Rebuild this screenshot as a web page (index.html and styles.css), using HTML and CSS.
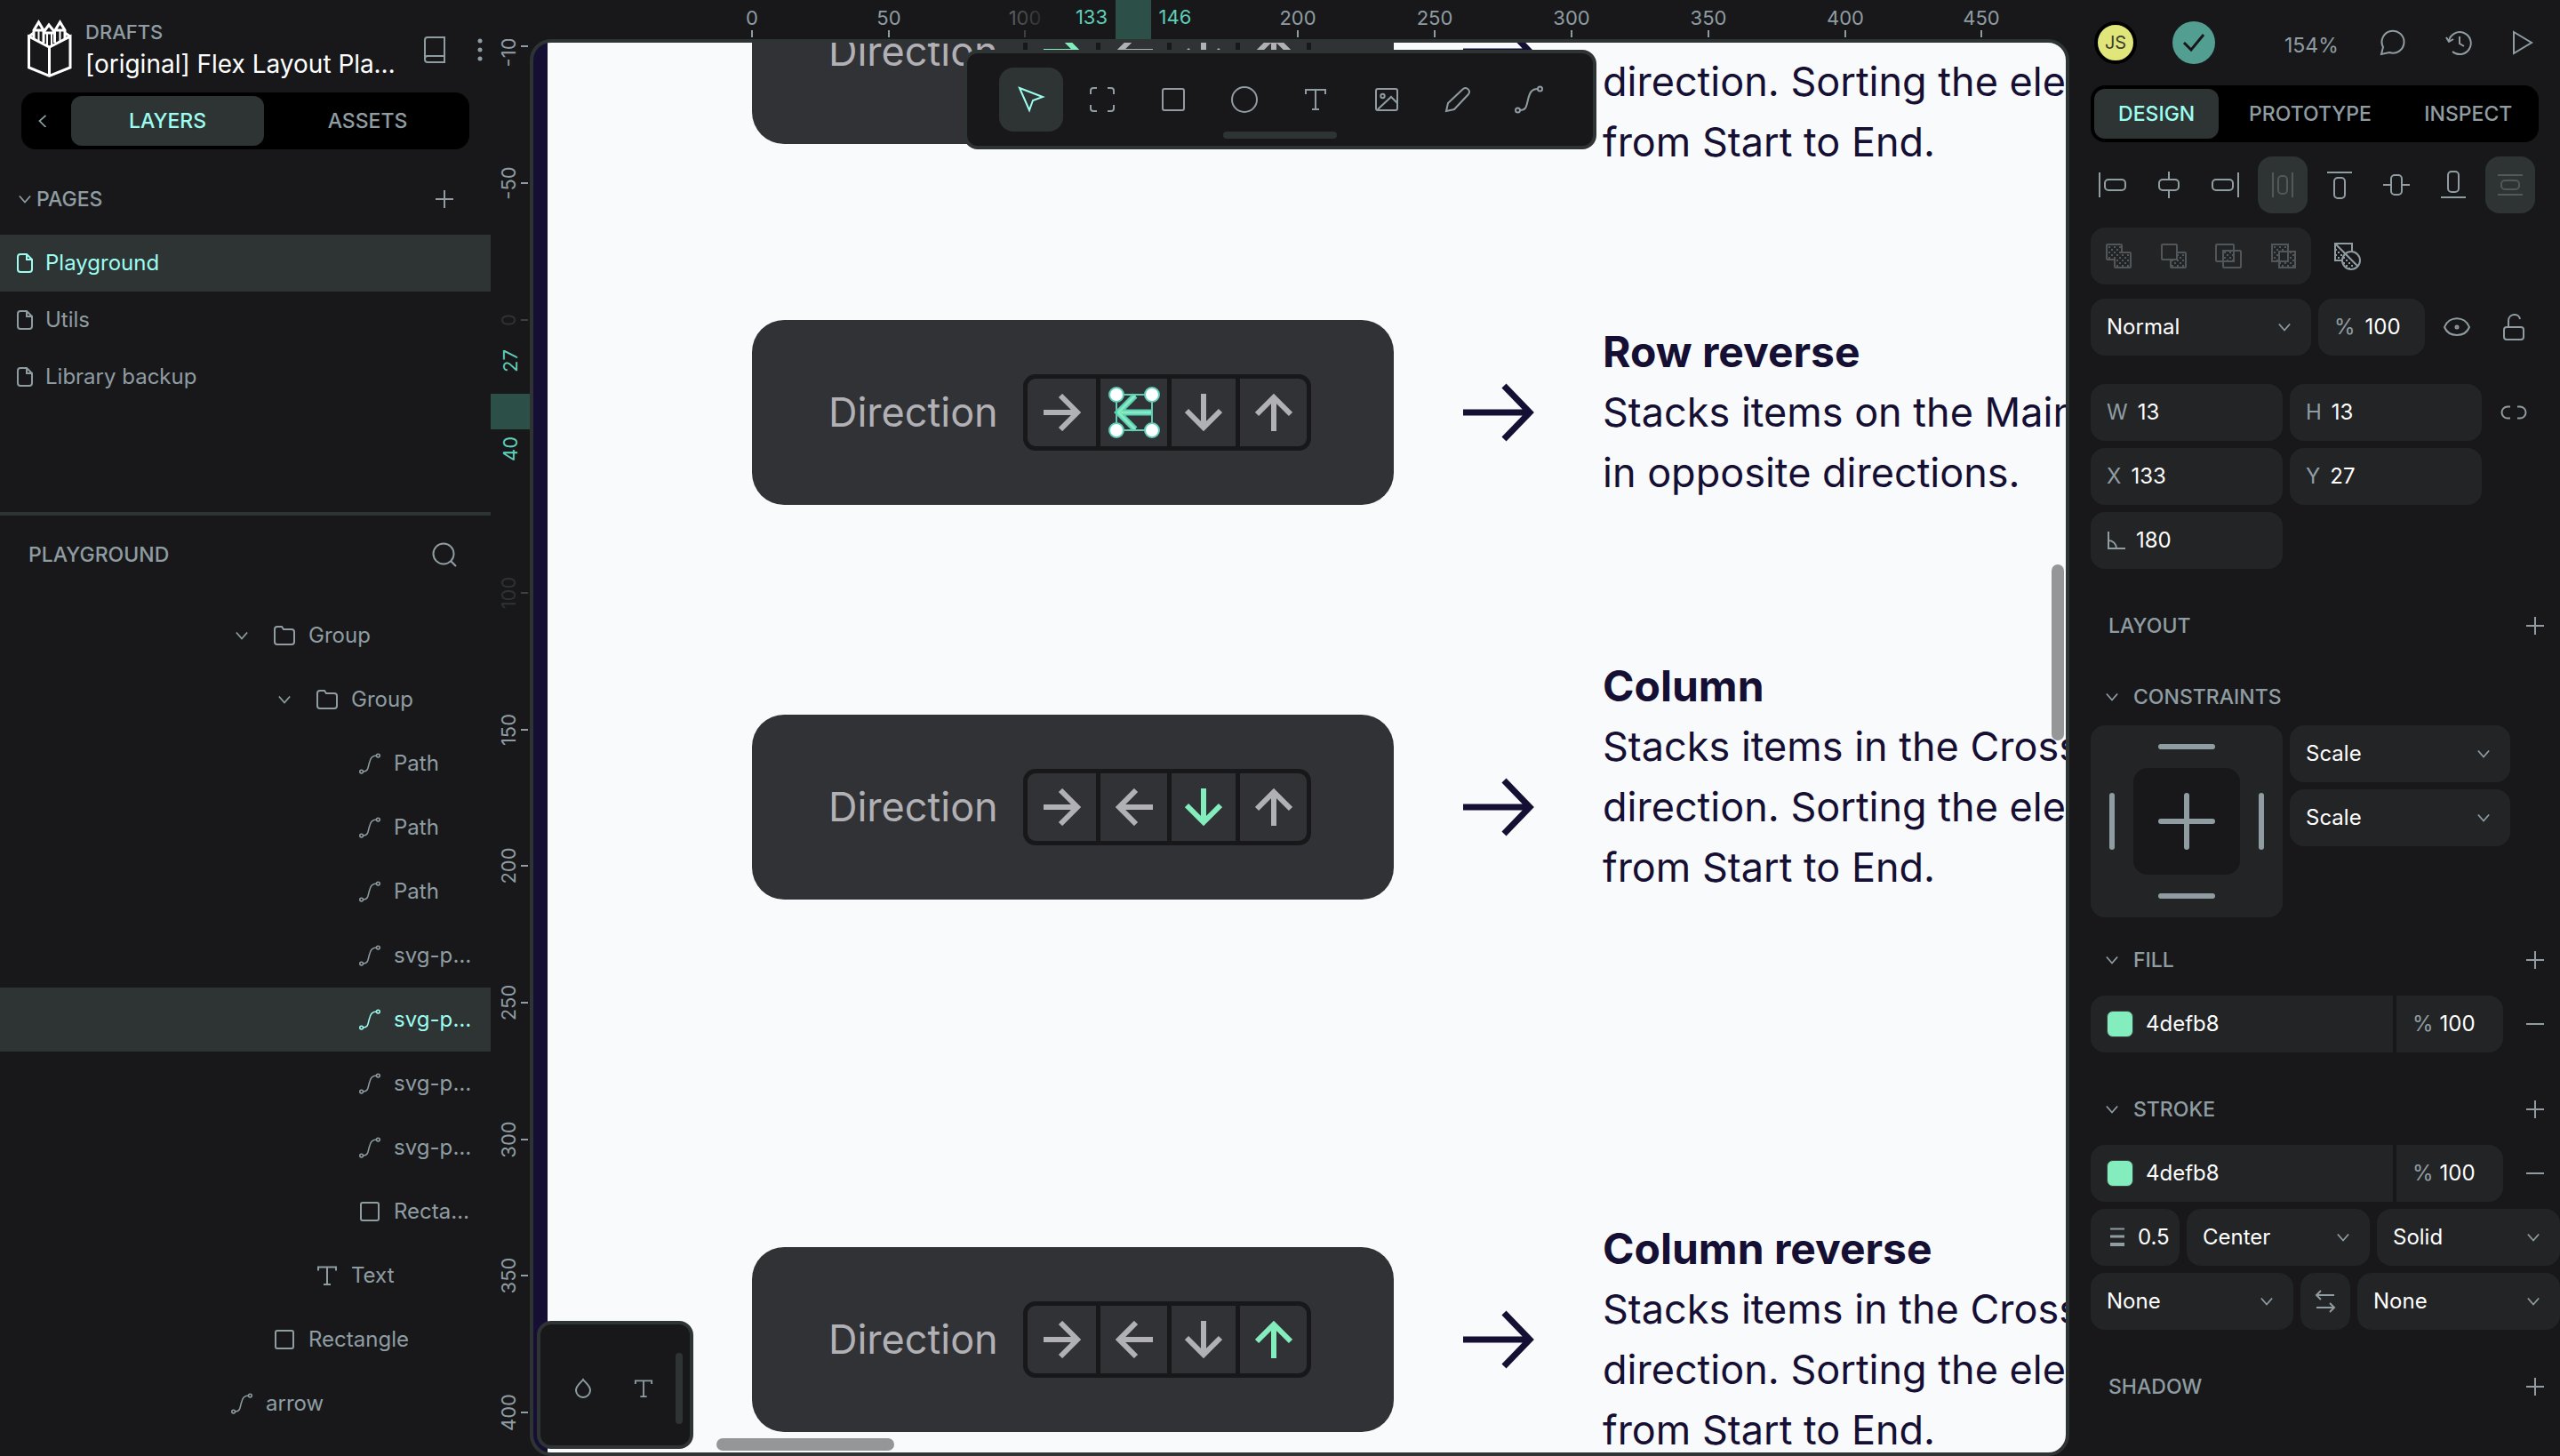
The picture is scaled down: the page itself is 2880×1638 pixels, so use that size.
FILE: index.html
```html
<!DOCTYPE html>
<html lang="en">
<head>
<meta charset="utf-8">
<title>[original] Flex Layout Playground</title>
<link rel="stylesheet" href="styles.css">
</head>
<body>
<svg class="defs" aria-hidden="true">
  <defs>
    <pattern id="dots-dim" width="6" height="6" patternUnits="userSpaceOnUse"><path d="M1 1h2v2h-2zM4 4h2v2h-2z" fill="#50565a" stroke="none"/></pattern>
    <pattern id="dots" width="6" height="6" patternUnits="userSpaceOnUse"><path d="M1 1h2v2h-2zM4 4h2v2h-2z" fill="#8f9da3" stroke="none"/></pattern>
    <linearGradient id="fade-x"><stop offset="0" stop-color="#5d6468"/><stop offset="1" stop-color="#2c2d30"/></linearGradient>
  </defs>
  <symbol id="chevron" viewBox="0 0 16 16"><path d="M1 4l7 8 7-8"/></symbol>
  <symbol id="chevron-left" viewBox="0 0 16 16"><path d="M12 1L4 8l8 8"/></symbol>
  <symbol id="plus" viewBox="0 0 20 20"><path d="M10 0v20M0 10h20"/></symbol>
  <symbol id="minus" viewBox="0 0 20 20"><path d="M0 10h20"/></symbol>
  <symbol id="page" viewBox="0 0 18 24"><path d="M11 2H4a3 3 0 0 0-3 3v14a3 3 0 0 0 3 3h10a3 3 0 0 0 3-3V8zM11 2v6h6"/></symbol>
  <symbol id="search" viewBox="0 0 28 28"><circle cx="13" cy="13" r="11.5"/><path d="M21 21l6 6"/></symbol>
  <symbol id="folder" viewBox="0 0 24 24"><path d="M4 2h5l2 3h9a3 3 0 0 1 3 3v11a3 3 0 0 1-3 3H4a3 3 0 0 1-3-3V5a3 3 0 0 1 3-3z"/></symbol>
  <symbol id="curve" viewBox="0 0 32 32"><circle cx="3.5" cy="28" r="2.5"/><circle cx="28.5" cy="4" r="2.5"/><path d="M6 28c7 0 7-4 9-12s4-12 11-12"/></symbol>
  <symbol id="rect" viewBox="0 0 24 24"><rect x="2" y="2" width="20" height="20" rx="2"/></symbol>
  <symbol id="text" viewBox="0 0 24 24"><path d="M2 6.5V2.5h20v4M12 2.5V22M8 22h8"/></symbol>
  <symbol id="link" viewBox="0 0 30 16"><path d="M11 1.500H8a6.500 6.500 0 0 0 0 13h3M19 1.500h3a6.500 6.500 0 0 1 0 13h-3"/></symbol>
  <symbol id="arrow" viewBox="0 0 42 42"><path d="M0 21h36M19 2l19 19-19 19"/></symbol>
</svg>

<div class="app">
  <aside class="left">
    <header class="file">
      <svg class="logo" viewBox="0 0 50 66"><path d="M1.500 18L24.500 30 48 18v35L24.500 62.500 1.500 53zM24.500 30v32M1.500 18L7 14M48 18l-6-4M7 20V11L12.500 2 18 11M31 11l5.500-9L42 11v10M18 25V13l6-8 6.500 8v12M7 11h11M31 11h11M18 14h13"/><path stroke-width="2" d="M12.500 12v11M22 15v13M27 15v13M36.500 12v11"/></svg>
      <div class="names">
        <span class="project">DRAFTS</span>
        <span class="title">[original] Flex Layout Playground</span>
      </div>
      <button class="icon" aria-label="Shared library"><svg width="26" height="32" viewBox="0 0 26 32"><path d="M5 2h19v28H5a3 3 0 0 1-3-3V5a3 3 0 0 1 3-3zM2 26a3 3 0 0 1 3-3h19"/></svg></button>
      <button class="icon" aria-label="Menu"><svg class="solid" width="8" height="28" viewBox="0 0 8 28"><circle cx="4" cy="4" r="2.500"/><circle cx="4" cy="14" r="2.500"/><circle cx="4" cy="24" r="2.500"/></svg></button>
    </header>
    <nav class="tabs side-tabs">
      <button class="back" aria-label="Collapse"><svg width="14" height="14"><use href="#chevron-left"/></svg></button>
      <button class="tab on">LAYERS</button>
      <button class="tab">ASSETS</button>
    </nav>
    <section class="pages">
      <div class="pages-head">
        <svg width="14" height="14"><use href="#chevron"/></svg>
        <h2>PAGES</h2>
        <button class="icon" aria-label="Add page"><svg width="20" height="20"><use href="#plus"/></svg></button>
      </div>
      <ul>
        <li><button class="page on"><svg width="18" height="24"><use href="#page"/></svg>Playground</button></li>
        <li><button class="page"><svg width="18" height="24"><use href="#page"/></svg>Utils</button></li>
        <li><button class="page"><svg width="18" height="24"><use href="#page"/></svg>Library backup</button></li>
      </ul>
    </section>
    <section class="layers">
      <div class="layers-head">
        <h2>PLAYGROUND</h2>
        <button class="icon" aria-label="Search"><svg width="28" height="28"><use href="#search"/></svg></button>
      </div>
      <ul>
        <li><button class="layer d1 open"><svg class="tw"><use href="#chevron"/></svg><svg><use href="#folder"/></svg><span>Group</span></button></li>
        <li><button class="layer d2 open"><svg class="tw"><use href="#chevron"/></svg><svg><use href="#folder"/></svg><span>Group</span></button></li>
        <li><button class="layer d3"><svg><use href="#curve"/></svg><span>Path</span></button></li>
        <li><button class="layer d3"><svg><use href="#curve"/></svg><span>Path</span></button></li>
        <li><button class="layer d3"><svg><use href="#curve"/></svg><span>Path</span></button></li>
        <li><button class="layer d3"><svg><use href="#curve"/></svg><span>svg-path</span></button></li>
        <li><button class="layer d3 on"><svg><use href="#curve"/></svg><span>svg-path</span></button></li>
        <li><button class="layer d3"><svg><use href="#curve"/></svg><span>svg-path</span></button></li>
        <li><button class="layer d3"><svg><use href="#curve"/></svg><span>svg-path</span></button></li>
        <li><button class="layer d3"><svg><use href="#rect"/></svg><span>Rectangle</span></button></li>
        <li><button class="layer d2"><svg><use href="#text"/></svg><span>Text</span></button></li>
        <li><button class="layer d1"><svg><use href="#rect"/></svg><span>Rectangle</span></button></li>
        <li><button class="layer d0"><svg><use href="#curve"/></svg><span>arrow</span></button></li>
      </ul>
    </section>
  </aside>

  <main class="workspace">
    <svg class="ruler ruler-x">
      <rect class="range" x="703" y="0" width="40" height="44"/>
      <path class="ticks" d="M294 34v8M448 34v8M908 34v8M1062 34v8M1216 34v8M1370 34v8M1524 34v8M1677 34v8"/>
      <path class="ticks dim" d="M601 34v8"/>
      <text x="294" y="28">0</text><text x="448" y="28">50</text><text x="601" y="28" class="fade">100</text>
      <text class="sel" x="676" y="27">133</text><text class="sel" x="770" y="27">146</text>
      <text x="908" y="28">200</text><text x="1062" y="28">250</text><text x="1216" y="28">300</text><text x="1370" y="28">350</text><text x="1524" y="28">400</text><text x="1677" y="28">450</text>
    </svg>
    <svg class="ruler ruler-y">
      <rect class="range" x="0" y="399" width="44" height="40"/>
      <path class="ticks" d="M34 8h8M34 162h8M34 777h8M34 930h8M34 1084h8M34 1238h8M34 1391h8M34 1545h8"/>
      <path class="ticks dim" d="M34 316h8M34 623h8"/>
      <text transform="translate(28 8) rotate(-90)">-100</text>
      <text transform="translate(28 162) rotate(-90)">-50</text>
      <text class="dim" transform="translate(28 316) rotate(-90)">0</text>
      <text class="sel" transform="translate(30 362) rotate(-90)">27</text>
      <text class="sel" transform="translate(30 461) rotate(-90)">40</text>
      <text class="dim" transform="translate(28 623) rotate(-90)">100</text>
      <text transform="translate(28 777) rotate(-90)">150</text>
      <text transform="translate(28 930) rotate(-90)">200</text>
      <text transform="translate(28 1084) rotate(-90)">250</text>
      <text transform="translate(28 1238) rotate(-90)">300</text>
      <text transform="translate(28 1391) rotate(-90)">350</text>
      <text transform="translate(28 1545) rotate(-90)">400</text>
    </svg>

    <div class="viewport">
      <article class="spec" style="top:-126px">
        <div class="card"><span>Direction</span>
          <div class="dirs"><i class="hit"><svg><use href="#arrow"/></svg></i><i class="l"><svg><use href="#arrow"/></svg></i><i class="d"><svg><use href="#arrow"/></svg></i><i class="u"><svg><use href="#arrow"/></svg></i></div>
        </div>
        <svg class="big" viewBox="0 0 80 66"><path d="M0 33h74M46 3l29 30-29 30"/></svg>
        <div class="note scrolled"><p>direction. Sorting the elements</p><p>from Start to End.</p></div>
      </article>
      <article class="spec" style="top:312px">
        <div class="card"><span>Direction</span>
          <div class="dirs"><i><svg><use href="#arrow"/></svg></i><i class="picked"><svg viewBox="0 0 42 42">
            <path class="edge" d="M40 21H6M22 2L3 21l19 19"/><path class="core" d="M40 21H6M22 2L3 21l19 19"/>
            <path class="box" d="M1 1h40v40H1z"/><g class="knobs"><circle cx="1" cy="1" r="8"/><circle cx="41" cy="1" r="8"/><circle cx="1" cy="41" r="8"/><circle cx="41" cy="41" r="8"/></g>
          </svg></i><i class="d"><svg><use href="#arrow"/></svg></i><i class="u"><svg><use href="#arrow"/></svg></i></div>
        </div>
        <svg class="big" viewBox="0 0 80 66"><path d="M0 33h74M46 3l29 30-29 30"/></svg>
        <div class="note"><h3>Row reverse</h3><p>Stacks items on the Main</p><p>in opposite directions.</p></div>
      </article>
      <article class="spec" style="top:690px">
        <div class="card"><span>Direction</span>
          <div class="dirs"><i><svg><use href="#arrow"/></svg></i><i class="l"><svg><use href="#arrow"/></svg></i><i class="d hit"><svg><use href="#arrow"/></svg></i><i class="u"><svg><use href="#arrow"/></svg></i></div>
        </div>
        <svg class="big" viewBox="0 0 80 66"><path d="M0 33h74M46 3l29 30-29 30"/></svg>
        <div class="note tall"><h3>Column</h3><p>Stacks items in the Cross</p><p>direction. Sorting the elements</p><p>from Start to End.</p></div>
      </article>
      <article class="spec" style="top:1323px">
        <div class="card"><span>Direction</span>
          <div class="dirs"><i><svg><use href="#arrow"/></svg></i><i class="l"><svg><use href="#arrow"/></svg></i><i class="d"><svg><use href="#arrow"/></svg></i><i class="u hit"><svg><use href="#arrow"/></svg></i></div>
        </div>
        <svg class="big" viewBox="0 0 80 66"><path d="M0 33h74M46 3l29 30-29 30"/></svg>
        <div class="note"><h3>Column reverse</h3><p>Stacks items in the Cross</p><p>direction. Sorting the elements</p><p>from Start to End.</p></div>
      </article>

      <div class="toolbar">
        <div class="tools">
          <button class="tool on" aria-label="Move"><svg viewBox="0 0 32 32"><path d="M3 3l26 10-11 4-4 11z"/></svg></button>
          <button class="tool" aria-label="Board"><svg viewBox="0 0 32 32"><path d="M3 10V6a3 3 0 0 1 3-3h4M22 3h4a3 3 0 0 1 3 3v4M29 22v4a3 3 0 0 1-3 3h-4M10 29H6a3 3 0 0 1-3-3v-4"/></svg></button>
          <button class="tool" aria-label="Rectangle"><svg viewBox="0 0 32 32"><rect x="4" y="4" width="24" height="24" rx="2"/></svg></button>
          <button class="tool" aria-label="Ellipse"><svg viewBox="0 0 32 32"><circle cx="16" cy="16" r="14"/></svg></button>
          <button class="tool" aria-label="Text"><svg viewBox="0 0 32 32"><path d="M5 10V5h22v5M16 5v22M12 27h8"/></svg></button>
          <button class="tool" aria-label="Image"><svg viewBox="0 0 32 32"><rect x="4" y="4" width="24" height="24" rx="2"/><circle cx="11.500" cy="12" r="2.200"/><path d="M6 27l15-14 7 7"/></svg></button>
          <button class="tool" aria-label="Curve"><svg viewBox="0 0 32 32"><path d="M3 29l2-9L22 4c4-3 9 2 6 6L12 27z"/></svg></button>
          <button class="tool" aria-label="Path"><svg viewBox="0 0 32 32"><use href="#curve"/></svg></button>
        </div>
        <div class="grip"></div>
      </div>

      <div class="palette">
        <button class="icon" aria-label="Colors"><svg width="20" height="24" viewBox="0 0 20 24"><path d="M10 2c-3 4-8 7-8 12a8 8 0 0 0 16 0c0-5-5-8-8-12z"/></svg></button>
        <button class="icon" aria-label="Typographies"><svg width="22" height="22"><use href="#text"/></svg></button>
        <div class="grip"></div>
      </div>
      <div class="scroll-y"></div>
      <div class="scroll-x"></div>
    </div>
  </main>

  <aside class="right">
    <header class="top">
      <span class="avatar">JS</span>
      <span class="saved"><svg width="26" height="22" viewBox="0 0 26 22"><path d="M2 11l8 8L24 2"/></svg></span>
      <span class="zoom">154%</span>
      <button class="icon" aria-label="Comments"><svg width="30" height="30" viewBox="0 0 30 30"><path d="M2 28l2-8a12.500 12.500 0 1 1 7 6z"/></svg></button>
      <button class="icon" aria-label="History"><svg width="30" height="30" viewBox="0 0 30 30"><path d="M8 25a12.500 12.500 0 1 0-4-12M1 9l3 5 5-3M16 8v8l5 3"/></svg></button>
      <button class="icon" aria-label="Play"><svg width="26" height="30" viewBox="0 0 26 30"><path d="M3 3l20 12L3 27z"/></svg></button>
    </header>
    <nav class="tabs panel-tabs">
      <button class="tab on">DESIGN</button>
      <button class="tab">PROTOTYPE</button>
      <button class="tab">INSPECT</button>
    </nav>

    <div class="aligns">
      <button aria-label="Align left"><svg viewBox="0 0 32 32"><path d="M2 2v28"/><rect x="8" y="10" width="23" height="12" rx="4"/></svg></button>
      <button aria-label="Align centre"><svg viewBox="0 0 32 32"><path d="M16 1v9M16 22v9"/><rect x="5" y="10" width="22" height="12" rx="4"/></svg></button>
      <button aria-label="Align right"><svg viewBox="0 0 32 32"><path d="M30 2v28"/><rect x="1" y="10" width="23" height="12" rx="4"/></svg></button>
      <button class="off" aria-label="Distribute horizontally" disabled><svg viewBox="0 0 32 32"><path d="M5 2v28M27 2v28"/><rect x="11" y="6" width="10" height="20" rx="4"/></svg></button>
      <button aria-label="Align top"><svg viewBox="0 0 32 32"><path d="M2 2h28"/><rect x="10" y="8" width="12" height="23" rx="4"/></svg></button>
      <button aria-label="Align middle"><svg viewBox="0 0 32 32"><path d="M1 16h9M22 16h9"/><rect x="10" y="5" width="12" height="22" rx="4"/></svg></button>
      <button aria-label="Align bottom"><svg viewBox="0 0 32 32"><path d="M2 30h28"/><rect x="10" y="1" width="12" height="23" rx="4"/></svg></button>
      <button class="off" aria-label="Distribute vertically" disabled><svg viewBox="0 0 32 32"><path d="M2 5h28M2 27h28"/><rect x="6" y="11" width="20" height="10" rx="4"/></svg></button>
    </div>

    <div class="row bools">
      <div class="group">
        <button aria-label="Union" disabled><svg viewBox="0 0 30 30"><path fill="url(#dots-dim)" d="M3 2h15a1 1 0 0 1 1 1v8h9a1 1 0 0 1 1 1v15a1 1 0 0 1-1 1H12a1 1 0 0 1-1-1v-8H3a1 1 0 0 1-1-1V3a1 1 0 0 1 1-1z"/></svg></button>
        <button aria-label="Difference" disabled><svg viewBox="0 0 30 30"><rect x="2" y="2" width="17" height="17" rx="1"/><path fill="url(#dots-dim)" d="M19 11h9a1 1 0 0 1 1 1v15a1 1 0 0 1-1 1H13a1 1 0 0 1-1-1v-8h7z"/></svg></button>
        <button aria-label="Intersection" disabled><svg viewBox="0 0 30 30"><rect x="1" y="2" width="20" height="19" rx="1"/><rect x="9" y="9" width="20" height="19" rx="1"/><path fill="url(#dots-dim)" d="M9 9h12v12H9z"/></svg></button>
        <button aria-label="Exclusion" disabled><svg viewBox="0 0 30 30"><path fill="url(#dots-dim)" fill-rule="evenodd" d="M2 2h18v19H2zM10 10h18v18H10z"/></svg></button>
      </div>
      <button class="icon" aria-label="Flatten"><svg width="30" height="30" viewBox="0 0 30 30"><path stroke="none" fill="url(#dots)" d="M1 1l26 26a10 10 0 0 1-18-7H1z"/><path d="M9 20H1V1h19v9M1 1l26 26"/><circle cx="19" cy="20" r="10"/></svg></button>
    </div>

    <div class="row blend">
      <label class="pick w248"><select aria-label="Blend mode"><option>Normal</option></select><svg width="14" height="14"><use href="#chevron"/></svg></label>
      <label class="field w120"><span>%</span><input value="100" aria-label="Opacity"></label>
      <button class="icon cell" aria-label="Toggle visibility"><svg width="32" height="24" viewBox="0 0 32 24"><path d="M2 12c5-13 23-13 28 0-5 12-23 12-28 0z"/><circle cx="16" cy="12" r="1.500"/></svg></button>
      <button class="icon cell" aria-label="Lock"><svg width="26" height="32" viewBox="0 0 26 32"><rect x="2" y="16" width="22" height="14" rx="3"/><path d="M7 16V9c0-9 12-9 13-2"/></svg></button>
    </div>

    <div class="measures">
      <label class="field"><span>W</span><input value="13"></label>
      <label class="field"><span>H</span><input value="13"></label>
      <button class="icon cell" aria-label="Lock proportions"><svg width="30" height="16"><use href="#link"/></svg></button>
      <label class="field"><span>X</span><input value="133"></label>
      <label class="field"><span>Y</span><input value="27"></label>
      <label class="field angle"><svg width="22" height="22" viewBox="0 0 22 22"><path d="M2 1v19h19M2 11a9 9 0 0 1 9 9"/></svg><input value="180" aria-label="Rotation"></label>
    </div>

    <div class="head bare"><h2>LAYOUT</h2><button class="icon" aria-label="Add layout"><svg width="20" height="20"><use href="#plus"/></svg></button></div>

    <div class="head"><svg width="14" height="14"><use href="#chevron"/></svg><h2>CONSTRAINTS</h2></div>
    <div class="constraints">
      <div class="pins">
        <b class="h"></b>
        <b class="v"></b><div class="center"><svg width="64" height="64" viewBox="0 0 64 64"><path d="M32 3v58M3 32h58"/></svg></div><b class="v"></b>
        <b class="h"></b>
      </div>
      <div class="stack">
        <label class="pick w248"><select aria-label="Horizontal constraint"><option>Scale</option></select><svg width="14" height="14"><use href="#chevron"/></svg></label>
        <label class="pick w248"><select aria-label="Vertical constraint"><option>Scale</option></select><svg width="14" height="14"><use href="#chevron"/></svg></label>
      </div>
    </div>

    <div class="head after-pins"><svg width="14" height="14"><use href="#chevron"/></svg><h2>FILL</h2><button class="icon" aria-label="Add fill"><svg width="20" height="20"><use href="#plus"/></svg></button></div>
    <div class="paint">
      <label class="field color"><i></i><input value="4defb8" aria-label="Fill color"></label>
      <label class="field alpha"><span>%</span><input value="100" aria-label="Fill opacity"></label>
      <button class="icon" aria-label="Remove fill"><svg width="22" height="20"><use href="#minus"/></svg></button>
    </div>

    <div class="head"><svg width="14" height="14"><use href="#chevron"/></svg><h2>STROKE</h2><button class="icon" aria-label="Add stroke"><svg width="20" height="20"><use href="#plus"/></svg></button></div>
    <div class="paint">
      <label class="field color"><i></i><input value="4defb8" aria-label="Stroke color"></label>
      <label class="field alpha"><span>%</span><input value="100" aria-label="Stroke opacity"></label>
      <button class="icon" aria-label="Remove stroke"><svg width="22" height="20"><use href="#minus"/></svg></button>
    </div>
    <div class="row wide">
      <label class="field weight"><svg width="16" height="22" viewBox="0 0 16 22"><path d="M0 1.500h16"/><path stroke-width="3" d="M0 10h16"/><path stroke-width="4" d="M0 19h16"/></svg><input value="0.5" aria-label="Stroke width"></label>
      <label class="pick"><select aria-label="Stroke position"><option>Center</option></select><svg width="14" height="14"><use href="#chevron"/></svg></label>
      <label class="pick"><select aria-label="Stroke style"><option>Solid</option></select><svg width="14" height="14"><use href="#chevron"/></svg></label>
    </div>
    <div class="row wide">
      <label class="pick"><select aria-label="Start cap"><option>None</option></select><svg width="14" height="14"><use href="#chevron"/></svg></label>
      <button class="swap" aria-label="Switch caps"><svg width="22" height="26" viewBox="0 0 22 26"><path d="M21 6H1M6 1L1 6l5 5M1 20h20M16 15l5 5-5 5"/></svg></button>
      <label class="pick"><select aria-label="End cap"><option>None</option></select><svg width="14" height="14"><use href="#chevron"/></svg></label>
    </div>

    <div class="head bare"><h2>SHADOW</h2><button class="icon" aria-label="Add shadow"><svg width="20" height="20"><use href="#plus"/></svg></button></div>
  </aside>
</div>
</body>
</html>
```
FILE: styles.css
```css
:root {
  --bg: #18181a;
  --raised: #232426;
  --line: #2e3434;
  --muted: #8f9da3;
  --accent: #9cfdf0;
  --teal: #5fceb8;
  --green: #84edbd;
  --navy: #150f33;
}

* { box-sizing: border-box; }
html, body { height: 100%; }
body {
  margin: 0;
  background: var(--bg);
  color: var(--muted);
  font: 400 24px/32px Inter, "Liberation Sans", sans-serif;
  overflow: hidden;
}
h2, h3, p, ul { margin: 0; padding: 0; }
ul { list-style: none; }
h2 { font-size: 23px; font-weight: 500; }
button, input, select { font: inherit; color: inherit; background: none; border: 0; padding: 0; margin: 0; }
button { display: flex; align-items: center; justify-content: center; }
input { min-width: 0; width: 100%; color: #fff; }
svg { fill: none; stroke: currentColor; stroke-width: 2; flex: none; overflow: visible; display: block; }
svg.solid { fill: currentColor; stroke: none; }
.defs { position: absolute; width: 0; height: 0; }

.app { display: grid; grid-template-columns: 552px minmax(0, 1fr) 552px; height: 100vh; }
.left, .right { overflow: hidden; }

/* tabs */
.tabs { display: flex; height: 64px; padding: 4px; background: #000; border-radius: 16px; font-size: 23px; font-weight: 500; }
.tab { border-radius: 12px; }
.tab.on { background: var(--line); color: var(--accent); }

/* left sidebar */
.file { display: flex; align-items: center; height: 104px; padding: 8px 8px 0 31px; }
.logo { width: 50px; height: 66px; color: #fff; stroke-width: 3; }
.names { display: flex; flex-direction: column; width: 360px; margin: 0 20px 0 15px; }
.project { font-size: 22px; font-weight: 500; }
.title { color: #fff; font-size: 28px; line-height: 40px; white-space: nowrap; overflow: hidden; text-overflow: ellipsis; }
.file .icon + .icon { margin-left: 34px; }
.side-tabs { margin: 0 24px; }
.back { width: 40px; margin-right: 12px; }
.side-tabs .tab { width: 217px; }
.side-tabs .tab + .tab { margin-left: 8px; }
.pages { height: 408px; padding-top: 24px; }
.pages-head { display: flex; align-items: center; height: 64px; padding: 0 42px 0 21px; margin-bottom: 8px; gap: 6px; }
.pages-head .icon { margin-left: auto; }
.page { width: 100%; height: 64px; justify-content: flex-start; gap: 14px; padding-left: 19px; }
.page.on, .layer.on { background: var(--line); color: var(--accent); }
.layers { border-top: 4px solid var(--line); }
.layers-head { display: flex; align-items: center; justify-content: space-between; height: 99px; padding: 0 38px 11px 32px; }
.layer { width: 100%; height: 72px; justify-content: flex-start; padding-right: 18px; }
.layer svg { width: 24px; height: 24px; margin-right: 15px; }
.layer span { min-width: 0; overflow: hidden; text-overflow: ellipsis; white-space: nowrap; text-align: left; }
.layer .tw { width: 14px; height: 14px; margin-right: 29px; }
.d0 { padding-left: 260px; }
.d1 { padding-left: 308px; }
.d2 { padding-left: 356px; }
.d3 { padding-left: 404px; }
.d1.open { padding-left: 265px; }
.d2.open { padding-left: 313px; }

/* rulers */
.workspace { display: grid; grid-template: 44px minmax(0, 1fr) / 44px minmax(0, 1fr); }
.ruler { width: 100%; height: 100%; overflow: hidden; }
.ruler-x { grid-column: 1 / 3; }
.ruler text { fill: var(--muted); stroke: none; font-size: 22px; text-anchor: middle; }
.ruler .fade { fill: url(#fade-x); }
.ruler .dim { fill: #2f3134; }
.ruler .sel { fill: var(--teal); }
.ruler path.dim { stroke: #3c4043; }
.range { fill: #2c4f48; stroke: none; }

/* canvas */
.viewport {
  position: relative;
  overflow: hidden;
  border: 4px solid var(--line);
  border-radius: 24px;
  background: linear-gradient(90deg, var(--navy) 16px, #f9fafc 16px);
  color: var(--navy);
}
.spec { position: absolute; left: 246px; display: flex; align-items: center; white-space: nowrap; }
.card {
  display: flex;
  align-items: center;
  width: 722px;
  height: 208px;
  padding: 0 93px 0 86px;
  justify-content: space-between;
  background: #313235;
  border-radius: 36px;
  color: #b1b0b5;
  font-size: 45px;
  line-height: 48px;
}
.dirs { display: grid; grid-template-columns: 77px 80px 77px 80px; height: 86px; border: 5px solid var(--bg); border-radius: 14px; }
.dirs i { display: grid; place-items: center; }
.dirs i + i { border-left: 5px solid var(--bg); }
.dirs svg { width: 42px; height: 42px; stroke-width: 6; }
.dirs .l svg { transform: rotate(180deg); }
.dirs .d svg { transform: rotate(90deg); }
.dirs .u svg { transform: rotate(-90deg); }
.hit { color: var(--green); }
.edge { stroke: var(--teal); stroke-width: 7; }
.core { stroke: var(--green); stroke-width: 3; }
.box { stroke: var(--teal); stroke-width: 2; }
.knobs { fill: #fff; stroke: var(--teal); stroke-width: 2; }
.big { width: 80px; height: 66px; margin: 0 77px 0 78px; stroke-width: 7; }
.note { font-size: 45px; line-height: 68px; }
.note h3 { font-size: 48px; font-weight: 700; }
.note.tall { padding-bottom: 68px; }
.note.scrolled { padding-top: 136px; }

.toolbar, .palette { position: absolute; background: var(--bg); border: 4px solid var(--line); border-radius: 16px; color: var(--muted); }
.toolbar { left: 484px; top: 8px; padding: 16px 36px 8px; }
.tools { display: flex; gap: 8px; }
.tool { width: 72px; height: 72px; border-radius: 16px; }
.tool.on { background: var(--line); color: var(--accent); }
.tool svg { width: 32px; height: 32px; }
.grip { background: var(--line); border-radius: 4px; }
.toolbar .grip { width: 128px; height: 8px; margin: 0 auto; }
.palette { left: 4px; bottom: 4px; display: flex; align-items: center; height: 144px; width: 176px; padding: 8px 0 0 38px; }
.palette .icon + .icon { margin-left: 47px; }
.palette .grip { width: 8px; height: 80px; margin-left: 25px; }
.scroll-y, .scroll-x { position: absolute; background: #959698; border-radius: 7px; }
.scroll-y { right: 2px; top: 587px; width: 14px; height: 198px; }
.scroll-x { left: 206px; bottom: 2px; width: 200px; height: 14px; }

/* right sidebar */
.right { padding-left: 24px; }
.top { display: flex; align-items: center; height: 96px; padding-left: 4px; }
.avatar, .saved { display: grid; place-items: center; width: 48px; height: 48px; border-radius: 50%; }
.avatar { background: #e0e67a; border: 4px solid #000; color: #3c3f2c; font-size: 20px; }
.saved { margin-left: 40px; background: #529e91; color: var(--bg); }
.saved svg { stroke-width: 3; }
.zoom { margin: 6px 46px 0 78px; font-size: 23px; }
.top .icon + .icon { margin-left: 44px; }
.panel-tabs { width: 504px; }
.panel-tabs .tab { flex: 1 1 140px; }
.panel-tabs .tab:nth-child(2) { flex-basis: 205px; }
.panel-tabs .tab:nth-child(3) { flex-basis: 150px; }
.aligns { display: flex; gap: 8px; margin: 16px 0 16px -4px; }
.aligns button { width: 56px; height: 64px; border-radius: 16px; }
.aligns svg { width: 32px; height: 32px; }
.aligns .off { background: var(--line); color: #50585a; }
.row { display: flex; gap: 8px; height: 64px; }
.group { display: flex; width: 248px; background: var(--raised); border-radius: 16px; color: #50565a; margin-right: 18px; }
.group button { width: 62px; color: inherit; }
.group svg { width: 30px; height: 30px; }
.blend { margin-top: 16px; }
.field, .pick { height: 64px; background: var(--raised); border-radius: 16px; }
.field { display: flex; align-items: center; gap: 11px; padding: 0 12px 0 18px; }
.pick { display: grid; align-items: center; color: var(--muted); }
.pick > * { grid-area: 1 / 1; }
.pick svg { justify-self: end; margin-right: 23px; pointer-events: none; }
.pick select { appearance: none; width: 100%; height: 64px; padding: 0 48px 0 18px; color: #fff; border-radius: 16px; }
.w248 { width: 248px; }
.w120 { width: 120px; }
.cell { width: 56px; }
.measures { display: grid; grid-template-columns: 216px 216px 56px; gap: 8px; margin-top: 32px; }
.measures .angle { grid-column: 1; }
.head { display: flex; align-items: center; height: 40px; margin: 44px 18px 20px 17px; gap: 17px; }
.head .icon { margin-left: auto; }
.head.bare { margin: 44px 18px 40px 20px; }
.bare + .head { margin: 40px 18px 12px 17px; }
.constraints { display: flex; gap: 8px; }
.pins { display: grid; grid-template: 48px 120px 48px / 48px 120px 48px; place-items: center; width: 216px; height: 216px; background: var(--raised); border-radius: 16px; }
.pins b { background: var(--muted); border-radius: 3px; }
.pins .h { grid-column: 2; width: 64px; height: 6px; }
.pins .h + .v { grid-column: 1; }
.pins .v { width: 6px; height: 64px; }
.center { display: grid; place-items: center; width: 120px; height: 120px; border-radius: 16px; background: var(--bg); }
.center svg { stroke-width: 6; stroke-linecap: round; }
.stack { display: grid; gap: 8px; align-content: start; }
.head.after-pins { margin-top: 28px; }
.paint { display: flex; align-items: center; gap: 4px; padding-right: 17px; }
.paint .color { width: 340px; border-radius: 16px 0 0 16px; gap: 14px; }
.paint .alpha { width: 120px; border-radius: 0 16px 16px 0; gap: 7px; }
.paint .icon { margin-left: auto; }
.color i { flex: none; width: 30px; height: 30px; border-radius: 7px; border: 1px solid #39403f; background: var(--green); }
.wide { margin-top: 8px; }
.wide .pick { flex: 1; }
.weight { width: 100px; padding: 0 8px 0 22px; gap: 15px; }
.swap { width: 56px; height: 64px; border-radius: 16px; background: var(--raised); color: var(--muted); }
```
